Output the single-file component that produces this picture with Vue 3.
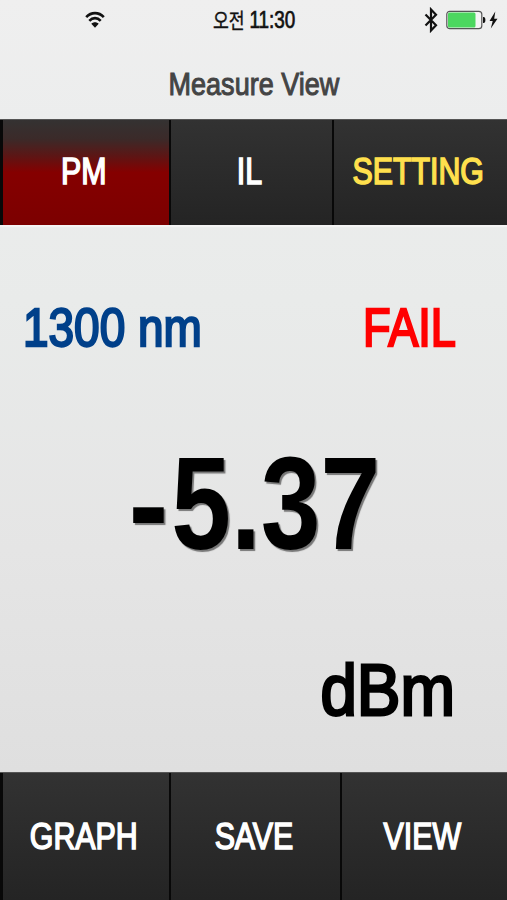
<template>
  <div class="screen">
    <!-- ── Status bar ─────────────────────────────────────────── -->
    <div class="status">
      <svg class="status__wifi" viewBox="0 0 20 18" fill="none" aria-hidden="true">
        <path d="M1.2 6.2C6.2 .8 13.8 .8 18.8 6.200M4.300 9.800c3.400-3.600 8-3.600 11.400 0" stroke="#111" stroke-width="2.600" />
        <path d="M6.300 12.800c2.200-2 5.200-2 7.400 0L10 16.700z" fill="#111" />
      </svg>
      <span class="status__time">오전 <span class="status__clock">11:30</span></span>
      <div class="status__right">
        <svg class="status__bt" viewBox="0 0 14 26" fill="none" aria-hidden="true">
          <path d="M1.500 7.500L12 18.200 7 23.500V2.500L12 7.800 1.500 18.500" stroke="#111" stroke-width="2.200" />
        </svg>
        <svg class="status__battery" viewBox="0 0 40 20" aria-hidden="true">
          <rect x=".8" y="1.300" width="35" height="17.400" rx="3" fill="#f4f4f4" stroke="#555" stroke-width="1.200" />
          <rect x="2" y="2.500" width="27.500" height="15" rx="1.500" fill="#4cd75f" />
          <path d="M37 7h.6q1.800 0 1.800 3t-1.800 3H37z" fill="#111" />
        </svg>
        <svg class="status__bolt" viewBox="0 0 9 18" aria-hidden="true">
          <path d="M6.300 .5L.5 10h3.200L1.800 17.500 8.500 7.700H5.200z" fill="#111" />
        </svg>
      </div>
    </div>

    <h1 class="title"><span class="title__text">Measure View</span></h1>

    <!-- ── Mode tabs ──────────────────────────────────────────── -->
    <nav class="bar bar--top">
      <button
        v-for="tab in tabs"
        :key="tab.id"
        class="bar__btn"
        :class="['bar__btn--' + tab.id, { 'is-active': tab.id === activeTab }]"
        @click="activeTab = tab.id"
      >
        <span class="bar__label">{{ tab.label }}</span>
      </button>
    </nav>

    <!-- ── Reading ────────────────────────────────────────────── -->
    <main class="reading">
      <div class="reading__head">
        <span class="reading__wave">{{ wavelength }} nm</span>
        <span class="reading__result">{{ result }}</span>
      </div>
      <div class="reading__value">
        <span class="reading__number"><span v-if="power < 0" class="reading__sign">-</span>{{ Math.abs(power).toFixed(2) }}</span>
      </div>
      <div class="reading__unit"><span class="reading__dbm">dBm</span></div>
    </main>

    <!-- ── Actions ────────────────────────────────────────────── -->
    <footer class="bar bar--bottom">
      <button v-for="action in actions" :key="action" class="bar__btn">
        <span class="bar__label">{{ action }}</span>
      </button>
    </footer>
  </div>
</template>

<script setup>
import { ref } from 'vue'

const tabs = [
  { id: 'pm',      label: 'PM' },
  { id: 'il',      label: 'IL' },
  { id: 'setting', label: 'SETTING' },
]
const actions = ['GRAPH', 'SAVE', 'VIEW']

const activeTab  = ref('pm')
const wavelength = ref(1300)
const power      = ref(-5.37)
const result     = ref('FAIL')
</script>

<style>
body {
  margin: 0;
}
</style>

<style scoped>
.screen {
  display:        flex;
  flex-direction: column;
  width:          507px;
  height:         900px;
  overflow:       hidden;
  background:     linear-gradient(#efefef 0, #eceded 119px, #e9ebea 300px, #e5e5e5 550px, #dfdfdf 772px);
  font-family:    "Liberation Sans", "Noto Sans CJK KR", sans-serif;
  line-height:    1;
  white-space:    nowrap;
}

/* ── Status bar ───────────────────────────────────────────────────────────── */
.status {
  display:               grid;
  grid-template-columns: 1fr auto 1fr;
  align-items:           center;
  height:                40px;
  color:                 #111;
}
.status__wifi {
  width:       20px;
  height:      18px;
  margin-left: 85px;
}
.status__time {
  font-size:         21px;
  padding-left:      1px;
  transform:         scaleX(.82);
  -webkit-text-stroke: .4px;
}
.status__clock {
  font-size: 23px;
  -webkit-text-stroke: .7px;
}
.status__right {
  display:         flex;
  align-items:     center;
  justify-content: flex-end;
  padding-right:   9px;
}
.status__bt {
  width:        14px;
  height:       26px;
  margin-right: 8px;
}
.status__battery {
  width:        40px;
  height:       20px;
  margin-right: 3px;
}
.status__bolt {
  width:  9px;
  height: 18px;
}

/* ── Title ────────────────────────────────────────────────────────────────── */
.title {
  height:      79px;
  margin:      0;
  padding-top: 29px;
  box-sizing:  border-box;
  text-align:  center;
  font-size:   31px;
  font-weight: 400;
  color:       #444;
  -webkit-text-stroke: 1px;
}
.title__text {
  display:   inline-block;
  transform: scaleX(.872);
}

/* ── Button bars ──────────────────────────────────────────────────────────── */
.bar {
  display:    grid;
  flex:       none;
  box-sizing: border-box;
  background: linear-gradient(#323232, #242424);
}
.bar--top {
  grid-template-columns: 169px 163px 175px;
  height:     106px;
  border-top: 1px solid #555;
  box-shadow: 0 2px 1px #f4f4f4;
}
.bar--bottom {
  grid-template-columns: 169px 171px 167px;
  height:     128px;
  border-top: 1px solid #555;
}
.bar__btn {
  display:         flex;
  align-items:     center;
  justify-content: center;
  padding:         0 2px 2px 0;
  border:          0;
  background:      none;
  box-shadow:      inset 2px 0 #080808;
  font:            400 37px/1 "Liberation Sans", sans-serif;
  color:           #fff;
  -webkit-text-stroke: 1.6px;
}
.bar__btn:first-child {
  box-shadow: inset 3px 0 #080808;
}
.bar--bottom .bar__btn {
  padding-bottom: 0;
}
.bar__label {
  transform: scaleX(.82);
}
.bar__btn--setting {
  color: #ffe04d;
}
.bar__btn--pm.is-active {
  background: linear-gradient(#343232 0, #3b2a29 18%, #5c1615 34%, #850000 50%, #7c0000 100%);
}

/* ── Reading ──────────────────────────────────────────────────────────────── */
.reading {
  display:        flex;
  flex:           1;
  flex-direction: column;
}
.reading__head {
  display:         flex;
  justify-content: space-between;
  padding:         76px 51px 0 23px;
  font-size:       53px;
  -webkit-text-stroke: 2.3px;
}
.reading__wave {
  color:            #00408a;
  transform:        scaleX(.867);
  transform-origin: left;
}
.reading__result {
  color:            #f00;
  transform:        scaleX(.853);
  transform-origin: right;
}
.reading__value {
  margin-top:   84px;
  padding-left: 4px;
  text-align:   center;
  font-size:    132px;
  font-weight:  700;
  color:        #000;
}
.reading__number {
  display:     inline-block;
  transform:   scaleX(.813);
  text-shadow: 2px 2px 1px #777;
}
.reading__sign {
  display:      inline-block;
  margin-right: 6px;
  transform:    scaleX(1.12);
}
.reading__unit {
  margin-top:    84px;
  padding-right: 52px;
  text-align:    right;
  font-size:     72px;
  color:         #000;
  -webkit-text-stroke: 2.9px;
}
.reading__dbm {
  display:          inline-block;
  transform:        scaleX(.909);
  transform-origin: right;
}
</style>
